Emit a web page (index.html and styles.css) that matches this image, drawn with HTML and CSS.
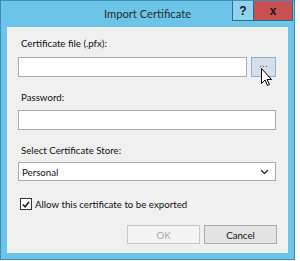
FILE: index.html
```html
<!DOCTYPE html>
<html lang="en">
<head>
  <meta charset="UTF-8" />
  <title>Import Certificate</title>
  <link rel="stylesheet" href="styles.css">
</head>
<body>

<div class="window">
  <div class="titlebar">
    <span class="title">Import Certificate</span>
    <div class="controls">
      <button class="ctl help">?</button>
      <button class="ctl close">x</button>
    </div>
  </div>

  <div class="content">
    <label class="lbl first">Certificate file (.pfx):</label>
    <div class="file-row">
      <input class="field" type="text" />
      <button class="browse">...</button>
      <svg class="cursor" width="12" height="19" viewBox="0 0 12 19">
        <path d="M0.5 0.5 L0.5 15.5 L4 12 L6.5 17.5 L8.5 16.5 L6 11.5 L10.5 11.5 Z" fill="#fff" stroke="#000" stroke-width="1"/>
      </svg>
    </div>

    <label class="lbl">Password:</label>
    <input class="field wide" type="password" />

    <label class="lbl">Select Certificate Store:</label>
    <div class="select">
      <span>Personal</span>
      <svg width="9" height="6" viewBox="0 0 9 6"><path d="M1 1 L4.5 4.5 L8 1" fill="none" stroke="#333" stroke-width="1.3"/></svg>
    </div>

    <div class="check-row">
      <span class="box">
        <svg width="11" height="11" viewBox="0 0 11 11"><path d="M2 5.5 L4.5 8 L9 2.5" fill="none" stroke="#222" stroke-width="1.8"/></svg>
      </span>
      <span>Allow this certificate to be exported</span>
    </div>

    <div class="actions">
      <button class="btn disabled">OK</button>
      <button class="btn">Cancel</button>
    </div>
  </div>
</div>

</body>
</html>
```

FILE: styles.css
```css
* {
  margin: 0;
  padding: 0;
  box-sizing: border-box;
}

body {
  background: #ffffff;
  font-family: Lato, 'Noto Sans', sans-serif;
  font-size: 9.7px;
  color: #111;
}

.window {
  width: 295px;
  height: 260px;
  background: #6cc5e8;
  border: 1px solid #3d8eb5;
  display: flex;
  flex-direction: column;
  position: relative;
}

.titlebar {
  height: 26px;
  display: flex;
  align-items: center;
  justify-content: center;
}

.title {
  font-size: 11.2px;
  color: #2b2b2b;
  margin-top: -2px;
}

.controls {
  position: absolute;
  top: 0;
  right: 1px;
  display: flex;
}

.ctl {
  height: 20px;
  border: 1px solid #3a6a80;
  border-top: none;
  font-family: 'Liberation Sans', sans-serif;
  font-weight: bold;
  font-size: 12px;
  color: #1a1a1a;
}

.help {
  width: 21px;
  background: #8fd4ef;
  border-right: none;
}

.close {
  width: 40px;
  background: #c75050;
}

.content {
  flex: 1;
  margin: 0 6px 6px 6px;
  background: #f0f0f0;
  padding: 8px 11px 0 11px;
  display: flex;
  flex-direction: column;
}

.lbl {
  line-height: 16px;
  padding-left: 3px;
  margin-top: 12px;
}

.lbl.first {
  margin-top: 0;
}

.file-row {
  display: flex;
  gap: 4px;
  margin-top: 6px;
  position: relative;
}

.field {
  height: 20px;
  width: 229px;
  border: 1px solid #abadb3;
  background: #fff;
  outline: none;
}

.field.wide {
  width: 258px;
  margin-top: 5px;
}

.browse {
  width: 25px;
  height: 20px;
  background: #d6dee8;
  border: 1px solid #8fb1d2;
  font-family: 'Liberation Sans', sans-serif;
  font-size: 10px;
  line-height: 10px;
  padding-bottom: 6px;
  color: #555;
}

.cursor {
  position: absolute;
  left: 243px;
  top: 11px;
}

.select {
  margin-top: 4px;
  width: 258px;
  height: 19px;
  background: #fff;
  border: 1px solid #abadb3;
  display: flex;
  align-items: center;
  justify-content: space-between;
  padding: 0 6px 0 3px;
}

.check-row {
  margin-top: 15px;
  display: flex;
  align-items: center;
  gap: 3px;
  padding-left: 2px;
  line-height: 16px;
}

.box {
  width: 12px;
  height: 12px;
  border: 1px solid #333;
  background: #fff;
  display: flex;
  align-items: center;
  justify-content: center;
}

.actions {
  margin-top: 13px;
  display: flex;
  justify-content: flex-end;
  gap: 4px;
}

.btn {
  width: 73px;
  height: 19px;
  font-family: Lato, sans-serif;
  font-size: 9.7px;
  background: #e3e3e3;
  border: 1px solid #acacac;
  color: #111;
}

.btn.disabled {
  background: #f4f4f4;
  border-color: #c8c8c8;
  color: #a8a8a8;
}
```
